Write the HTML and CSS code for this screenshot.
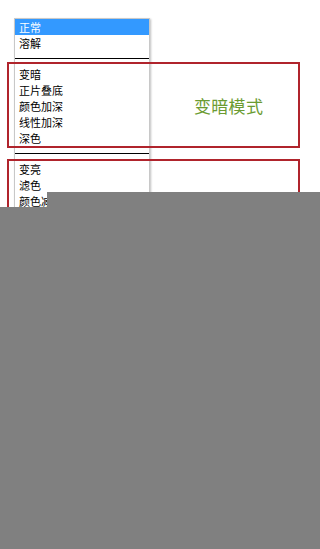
FILE: index.html
```html
<!DOCTYPE html>
<html lang="zh">
<head>
<meta charset="utf-8">
<title>混合模式</title>
<link rel="stylesheet" href="styles.css">
</head>
<body>
<div class="page">
  <div class="menu">
    <div class="item sel">正常</div>
    <div class="item">溶解</div>
    <div class="sep"></div>
    <div class="item">变暗</div>
    <div class="item">正片叠底</div>
    <div class="item">颜色加深</div>
    <div class="item">线性加深</div>
    <div class="item">深色</div>
    <div class="sep"></div>
    <div class="item">变亮</div>
    <div class="item">滤色</div>
    <div class="item">颜色减淡</div>
    <div class="item">线性减淡（添加）</div>
    <div class="item">浅色</div>
  </div>
  <div class="note note-dark"><span class="note-label">变暗模式</span></div>
  <div class="note note-light"></div>
  <div class="cover">
    <div class="cover-top"></div>
    <div class="cover-main"></div>
  </div>
</div>
</body>
</html>
```
FILE: styles.css
```css
html, body {
  margin: 0;
  padding: 0;
  background: #ffffff;
}
.page {
  position: relative;
  width: 320px;
  height: 549px;
  overflow: hidden;
  padding-top: 18px;
  box-sizing: border-box;
  font-family: "Noto Sans CJK SC", "Noto Sans", sans-serif;
}
.menu {
  margin-left: 14px;
  width: 134px;
  background: #ffffff;
  border: 1px solid #c8c8c8;
  border-bottom: none;
  box-shadow: 1px 1px 2px rgba(0, 0, 0, 0.25);
}
.item {
  height: 16px;
  line-height: 16px;
  font-size: 11px;
  color: #000000;
  padding-left: 4px;
  white-space: nowrap;
}
.item.sel {
  background: #3399ff;
  color: #ffffff;
}
.sep {
  height: 15px;
  display: flex;
  align-items: center;
}
.sep::before {
  content: "";
  display: block;
  width: 100%;
  height: 1px;
  background: #000000;
}
.note {
  position: absolute;
  left: 7px;
  width: 293px;
  border: 2px solid #b0242c;
  box-sizing: border-box;
}
.note-dark {
  top: 62px;
  height: 86px;
  display: flex;
  align-items: center;
  padding-left: 185px;
}
.note-label {
  font-size: 17px;
  color: #6b9b31;
  letter-spacing: 0.3px;
  white-space: nowrap;
}
.note-light {
  top: 159px;
  height: 120px;
}
.cover {
  position: absolute;
  top: 192px;
  left: 0;
  right: 0;
  bottom: 0;
  display: flex;
  flex-direction: column;
}
.cover-top {
  margin-left: 47px;
  height: 15px;
  background: #808080;
}
.cover-main {
  flex: 1;
  background: #808080;
}
```
